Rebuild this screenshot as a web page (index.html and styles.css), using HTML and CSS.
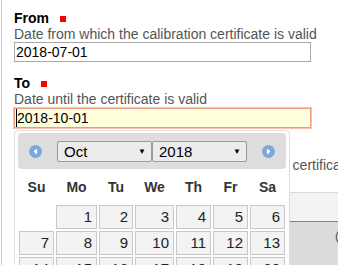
FILE: index.html
```html
<!DOCTYPE html>
<html lang="en">
<head>
    <meta charset="UTF-8">
    <meta name="viewport" content="width=device-width, initial-scale=1.0">
    <title>Calibration certificate</title>
    <link rel="stylesheet" href="styles.css">
</head>
<body>

    <div class="page">
        <div class="field">
            <div class="label">From <span class="req"></span></div>
            <div class="hint">Date from which the calibration certificate is valid</div>
            <input class="date" type="text" value="2018-07-01">
        </div>

        <div class="field">
            <div class="label">To <span class="req"></span></div>
            <div class="hint">Date until the certificate is valid</div>
            <div class="picker-wrap">
                <input class="date focused" type="text" value="2018-10-01">

                <div class="datepicker">
                    <div class="dp-header">
                        <svg class="dp-nav" width="13" height="13" viewBox="0 0 13 13">
                            <circle cx="6.5" cy="6.5" r="6.5" fill="#79aad9"/>
                            <polygon points="8,3.5 8,9.5 4.5,6.5" fill="#fff"/>
                        </svg>
                        <div class="dp-selects">
                            <label class="sel"><select><option>Oct</option></select></label>
                            <label class="sel"><select><option>2018</option></select></label>
                        </div>
                        <svg class="dp-nav" width="13" height="13" viewBox="0 0 13 13">
                            <circle cx="6.5" cy="6.5" r="6.5" fill="#79aad9"/>
                            <polygon points="5,3.5 5,9.5 8.5,6.5" fill="#fff"/>
                        </svg>
                    </div>
                    <table class="dp-days">
                        <colgroup>
                            <col style="width:37px"><col style="width:43px"><col style="width:36px"><col style="width:41px"><col style="width:37px"><col style="width:37px"><col style="width:37px">
                        </colgroup>
                        <thead>
                            <tr><th>Su</th><th>Mo</th><th>Tu</th><th>We</th><th>Th</th><th>Fr</th><th>Sa</th></tr>
                        </thead>
                        <tbody>
                            <tr><td></td><td><a>1</a></td><td><a>2</a></td><td><a>3</a></td><td><a>4</a></td><td><a>5</a></td><td><a>6</a></td></tr>
                            <tr><td><a>7</a></td><td><a>8</a></td><td><a>9</a></td><td><a>10</a></td><td><a>11</a></td><td><a>12</a></td><td><a>13</a></td></tr>
                            <tr><td><a>14</a></td><td><a>15</a></td><td><a>16</a></td><td><a>17</a></td><td><a>18</a></td><td><a>19</a></td><td><a>20</a></td></tr>
                            <tr><td><a>21</a></td><td><a>22</a></td><td><a>23</a></td><td><a>24</a></td><td><a>25</a></td><td><a>26</a></td><td><a>27</a></td></tr>
                            <tr><td><a>28</a></td><td><a>29</a></td><td><a>30</a></td><td><a>31</a></td><td></td><td></td><td></td></tr>
                        </tbody>
                    </table>
                </div>
            </div>
        </div>

        <div class="field">
            <div class="label">Certificate <span class="req"></span></div>
            <div class="hint nowrap">Upload a scanned copy of the full calibration certificate</div>
            <div class="upload">
                <div class="upload-bar"></div>
                <div class="upload-body">(PDF, max. 10 MB)</div>
            </div>
        </div>
    </div>

</body>
</html>
```

FILE: styles.css
```css
body {
    margin: 0;
    font-family: "Liberation Sans", Arial, sans-serif;
    font-size: 14px;
    color: #000;
    background: #fff;
    overflow: hidden;
}
.page {
    margin-left: 1px;
    border-left: 1px solid #d0d0d0;
    padding: 10px 0 0 12px;
    min-height: 100vh;
    box-sizing: border-box;
}
.field {
    margin-bottom: 13px;
}
.label {
    font-weight: bold;
    line-height: 16px;
}
.req {
    display: inline-block;
    width: 6px;
    height: 6px;
    margin-left: 7px;
    background: #f00;
    vertical-align: 1px;
}
.hint {
    color: #555;
    line-height: 16px;
}
.nowrap {
    white-space: nowrap;
}
.date {
    display: block;
    width: 297px;
    height: 20px;
    box-sizing: border-box;
    margin: 0;
    padding: 0 1px;
    border: 1px solid #a9a9a9;
    font-family: "Liberation Sans", Arial, sans-serif;
    font-size: 14px;
    color: #000;
    background: #fff;
}
.date.focused {
    margin-top: 1px;
    padding-left: 2px;
    border-color: #eb9c80;
    background: #ffffde;
    box-shadow: 0 0 0 1px #f6c2ad, inset 1px 0 0 #ffffde, inset 2px 0 0 #000;
    outline: none;
}
.picker-wrap {
    position: relative;
}

/* datepicker popup */
.datepicker {
    position: absolute;
    top: 22px;
    left: 0;
    width: 276px;
    box-sizing: border-box;
    padding: 2px 3px 4px;
    border: 1px solid #dcdcdc;
    border-radius: 4px;
    background: #fff;
    z-index: 5;
}
.dp-header {
    display: flex;
    align-items: center;
    height: 36px;
    padding: 0 11px;
    box-sizing: border-box;
    background: #dddddd;
    border-radius: 4px;
}
.dp-nav {
    flex: none;
    display: block;
}
.dp-selects {
    flex: 1;
    display: flex;
    margin: 0 15px;
}
.sel {
    position: relative;
    width: 95px;
}
.sel select {
    -webkit-appearance: none;
    appearance: none;
    display: block;
    width: 100%;
    height: 21px;
    margin: 0;
    padding: 0 0 0 6px;
    border: 1px solid #9a9a9a;
    border-radius: 2px;
    background: #ececec;
    font-family: "Liberation Sans", Arial, sans-serif;
    font-size: 15px;
    color: #000;
}
.sel::after {
    content: "\25BC";
    position: absolute;
    right: 6px;
    top: 6px;
    font-size: 8px;
    line-height: 9px;
    color: #000;
    pointer-events: none;
}
.dp-days {
    width: 268px;
    table-layout: fixed;
    border-collapse: collapse;
    margin: 0;
}
.dp-days th {
    height: 35px;
    padding: 0;
    text-align: center;
    font-weight: bold;
    font-size: 14px;
    color: #333;
}
.dp-days td {
    padding: 1px;
}
.dp-days td a {
    display: block;
    padding: 3px 4px;
    border: 1px solid #c8c8c8;
    background: #f3f3f3;
    text-align: right;
    font-size: 15px;
    line-height: 16px;
    color: #222;
}

/* upload area behind the popup */
.upload {
    margin-top: 19px;
    width: 400px;
}
.upload-bar {
    height: 28px;
    border-top: 1px solid #dadada;
    border-bottom: 1px solid #4a8fc5;
    background: #f3f3f3;
}
.upload-body {
    height: 60px;
    padding: 6px 0 0 321px;
    background: #dcdcdc;
    color: #555;
    font-size: 13px;
    white-space: nowrap;
}
```
